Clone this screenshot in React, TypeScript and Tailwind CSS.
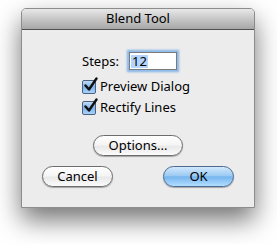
import React from "react";

const font = { fontFamily: '"Noto Sans", "Liberation Sans", sans-serif' };

function Check() {
  return (
    <div className="relative w-[15px] h-[15px] shrink-0">
      <div className="absolute left-0 top-[1px] w-[14px] h-[14px] rounded-[2px] border border-[#4a6182] bg-gradient-to-b from-[#c2dcf6] via-[#7fb3e8] to-[#a8d3fb]" />
      <svg className="absolute left-[1px] -top-[2px]" width="16" height="16" viewBox="0 0 16 16">
        <path d="M2.5 8.5 L6 12.5 L13.5 1.5" fill="none" stroke="#111" strokeWidth="2.4" strokeLinecap="round" strokeLinejoin="round" />
      </svg>
    </div>
  );
}

function Btn({ children, w, primary }: { children: React.ReactNode; w: string; primary?: boolean }) {
  return (
    <div
      className={
        "h-[21px] rounded-full border flex items-center justify-center text-[13px] leading-none text-black shadow-[0_1px_1px_rgba(0,0,0,0.3)] " +
        w +
        (primary
          ? " border-[#4d6a93] bg-[linear-gradient(#d2e8fb_0%,#9ccbf4_45%,#76b5ef_52%,#b2defe_100%)]"
          : " border-[#6c6c6c] bg-[linear-gradient(#ffffff_0%,#f5f5f5_45%,#e9e9e9_55%,#fbfbfb_100%)]")
      }
    >
      <span className="-mt-[1px]">{children}</span>
    </div>
  );
}

export default function App() {
  return (
    <div className="w-[277px] h-[244px] bg-white pt-[8px] pl-[21px] overflow-hidden" style={font}>
      <div className="w-[234px] h-[200px] rounded-t-[5px] border border-[#8c8c8c] bg-[#ececec] flex flex-col shadow-[0_12px_26px_rgba(0,0,0,0.55)]">
        <div className="h-[21px] shrink-0 rounded-t-[4px] bg-gradient-to-b from-[#e8e8e8] to-[#a7a7a7] border-b border-[#505050] flex items-center justify-center text-[13px] leading-none text-black">
          <span className="-mt-[1px]">Blend Tool</span>
        </div>
        <div className="flex flex-col pt-[20px]">
          <div className="flex items-center h-[22px] pl-[60px]">
            <span className="text-[13px] leading-none text-black w-[45px]">Steps:</span>
            <div className="ml-[2px] w-[48px] h-[18px] border border-[#7b7b7b] bg-white flex items-center pl-[1px] shadow-[0_0_0_1px_#91bbe9,0_0_2px_2px_#7fb0e6]">
              <span className="text-[13px] leading-[13px] bg-[#b3d4fd] px-[1px] text-black">12</span>
            </div>
          </div>
          <div className="flex items-center h-[21px] pl-[60px] mt-[4px]">
            <Check />
            <span className="ml-[3px] text-[13px] leading-none text-black">Preview Dialog</span>
          </div>
          <div className="flex items-center h-[21px] pl-[60px]">
            <Check />
            <span className="ml-[3px] text-[13px] leading-none text-black">Rectify Lines</span>
          </div>
          <div className="flex justify-center mt-[17px]">
            <Btn w="w-[90px]">Options...</Btn>
          </div>
          <div className="flex justify-between px-[20px] mt-[10px]">
            <Btn w="w-[71px]">Cancel</Btn>
            <Btn w="w-[71px]" primary>
              OK
            </Btn>
          </div>
        </div>
      </div>
    </div>
  );
}
